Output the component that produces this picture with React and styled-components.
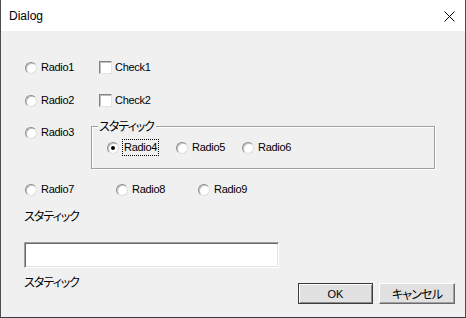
import React from "react";
import styled, { createGlobalStyle } from "styled-components";

const Global = createGlobalStyle`
  html, body { margin: 0; padding: 0; background: #ffffff; }
  body { font-family: "Liberation Sans", "Noto Sans CJK JP", sans-serif; }
  * { box-sizing: border-box; }
`;

const Window = styled.div`
  width: 466px;
  height: 318px;
  display: flex;
  flex-direction: column;
  border-left: 1px solid #4d4d4d;
  border-right: 1px solid #4d4d4d;
  border-bottom: 1px solid #3a3a44;
  background: #f0f0f0;
  overflow: hidden;
`;

const TitleBar = styled.div`
  height: 31px;
  flex: none;
  background: #ffffff;
  display: flex;
  align-items: center;
  justify-content: space-between;
  padding: 0 10px 0 8px;
`;

const Title = styled.span`
  font-family: "Liberation Sans", sans-serif;
  font-size: 12px;
  color: #000;
  line-height: 16px;
`;

const CloseIcon = styled.svg`
  width: 11px;
  height: 11px;
  display: block;
  margin-top: 1px;
`;

const Client = styled.div`
  flex: 1;
  display: flex;
  flex-direction: column;
  padding: 0 10px 0 23px;
`;

const Row = styled.div`
  display: flex;
  align-items: ${(p) => p.$align || "center"};
  margin-top: ${(p) => p.$top}px;
  height: ${(p) => (p.$h ? `${p.$h}px` : "auto")};
`;

const Option = styled.div`
  display: flex;
  align-items: center;
  width: ${(p) => (p.$w ? `${p.$w}px` : "auto")};
  margin-left: ${(p) => p.$ml || 0}px;
  flex: none;
  height: 13px;
`;

const RadioMark = styled.span`
  width: 12px;
  height: 12px;
  flex: none;
  margin-right: 1px;
  border-radius: 50%;
  border: 1px solid;
  border-color: #8c8c8c #dedede #dedede #8c8c8c;
  box-shadow: inset 1px 1px 0 #c4c4c4;
  background: #ffffff;
  display: flex;
  align-items: center;
  justify-content: center;
  &::after {
    content: "";
    width: 4px;
    height: 4px;
    border-radius: 50%;
    background: ${(p) => (p.$checked ? "#000" : "transparent")};
  }
`;

const CheckMark = styled.span`
  width: 13px;
  height: 13px;
  flex: none;
  border: 1px solid;
  border-color: #848484 #e4e4e4 #e4e4e4 #848484;
  box-shadow: inset 1px 1px 0 #bdbdbd;
  background: #ffffff;
`;

const Label = styled.span`
  font-family: "Liberation Sans", "Noto Sans CJK JP", sans-serif;
  font-size: 11px;
  letter-spacing: -0.3px;
  color: #000;
  line-height: 13px;
  white-space: nowrap;
  margin-left: ${(p) => (p.$focus ? 2 : 3)}px;
  padding: ${(p) => (p.$focus ? "1px 1px 1px 1px" : "0")};
  border: ${(p) => (p.$focus ? "1px dotted #000" : "none")};
  margin-top: ${(p) => (p.$focus ? "-2px" : "0")};
  margin-bottom: ${(p) => (p.$focus ? "-2px" : "0")};
`;

const Kana = styled.span`
  font-family: "Noto Sans CJK JP", sans-serif;
  font-size: 12px;
  font-feature-settings: "palt";
  letter-spacing: -1px;
  line-height: 16px;
  color: #000;
  white-space: nowrap;
`;

const Static = styled(Kana)`
  display: block;
  margin-top: ${(p) => p.$top}px;
`;

const Group = styled.div`
  position: relative;
  width: 344px;
  height: 43px;
  border: 1px solid #a0a0a0;
  box-shadow: 1px 1px 0 #ffffff, inset 1px 1px 0 #ffffff;
  display: flex;
  align-items: center;
  padding-left: 15px;
`;

const GroupLabel = styled(Kana)`
  position: absolute;
  left: 6px;
  top: -9px;
  background: #f0f0f0;
  padding: 0 2px 0 1px;
`;

const Footer = styled.div`
  display: flex;
  justify-content: space-between;
  align-items: flex-start;
  margin-top: 18px;
`;

const LeftCol = styled.div`
  display: flex;
  flex-direction: column;
`;

const Edit = styled.div`
  width: 255px;
  height: 26px;
  background: #ffffff;
  border: 1px solid;
  border-color: #a0a0a0 #ffffff #ffffff #a0a0a0;
  box-shadow: inset 1px 1px 0 #696969, inset -1px -1px 0 #e3e3e3;
`;

const Buttons = styled.div`
  display: flex;
  gap: 6px;
  margin-top: 41px;
`;

const Button = styled.button`
  width: ${(p) => p.$w}px;
  height: 21px;
  padding: 0;
  margin: 0;
  background: #e1e1e1;
  font-family: ${(p) =>
    p.$kana ? `"Noto Sans CJK JP", sans-serif` : `"Liberation Sans", sans-serif`};
  font-size: ${(p) => (p.$kana ? 12 : 11)}px;
  font-feature-settings: "palt";
  letter-spacing: ${(p) => (p.$kana ? "-0.8px" : "0")};
  color: #000;
  display: flex;
  align-items: center;
  justify-content: center;
  border: 1px solid;
  border-color: ${(p) =>
    p.$default ? "#3c3c3c" : "#ffffff #696969 #696969 #ffffff"};
  box-shadow: ${(p) =>
    p.$default
      ? "inset 1px 1px 0 #ffffff, inset -1px -1px 0 #8a8a8a"
      : "inset -1px -1px 0 #a0a0a0"};
`;

function Radio({ label, w, ml, checked, focus }) {
  return (
    <Option $w={w} $ml={ml}>
      <RadioMark $checked={checked} />
      <Label $focus={focus}>{label}</Label>
    </Option>
  );
}

function Check({ label, w }) {
  return (
    <Option $w={w}>
      <CheckMark />
      <Label>{label}</Label>
    </Option>
  );
}

export default function App() {
  return (
    <>
      <Global />
      <Window>
        <TitleBar>
          <Title>Dialog</Title>
          <CloseIcon viewBox="0 0 11 11">
            <path d="M0.5 0.5 L10.5 10.5 M10.5 0.5 L0.5 10.5" stroke="#000" strokeWidth="1" fill="none" />
          </CloseIcon>
        </TitleBar>
        <Client>
          <Row $top={30} $h={13}>
            <Radio label="Radio1" w={74} ml={1} />
            <Check label="Check1" />
          </Row>
          <Row $top={20} $h={13}>
            <Radio label="Radio2" w={74} ml={1} />
            <Check label="Check2" />
          </Row>
          <Row $top={19} $align="flex-start">
            <Radio label="Radio3" w={66} ml={1} />
            <Group>
              <GroupLabel>スタティック</GroupLabel>
              <Radio label="Radio4" w={69} checked focus />
              <Radio label="Radio5" w={66} />
              <Radio label="Radio6" />
            </Group>
          </Row>
          <Row $top={14} $h={13}>
            <Radio label="Radio7" w={91} ml={1} />
            <Radio label="Radio8" w={82} />
            <Radio label="Radio9" />
          </Row>
          <Static $top={12}>スタティック</Static>
          <Footer>
            <LeftCol>
              <Edit />
              <Static $top={6}>スタティック</Static>
            </LeftCol>
            <Buttons>
              <Button $w={75} $default>OK</Button>
              <Button $w={76} $kana>キャンセル</Button>
            </Buttons>
          </Footer>
        </Client>
      </Window>
    </>
  );
}
